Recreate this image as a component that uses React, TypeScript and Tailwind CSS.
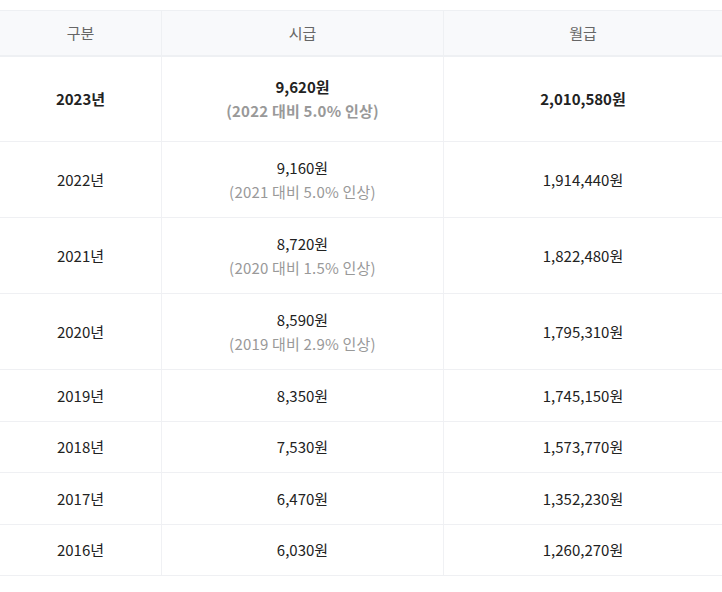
import React from "react";

type Row = {
  year: string;
  hourly: string;
  note?: string;
  monthly: string;
  h: string;
  bold?: boolean;
};

const rows: Row[] = [
  { year: "2023년", hourly: "9,620원", note: "(2022 대비 5.0% 인상)", monthly: "2,010,580원", h: "h-[85px]", bold: true },
  { year: "2022년", hourly: "9,160원", note: "(2021 대비 5.0% 인상)", monthly: "1,914,440원", h: "h-[76px]" },
  { year: "2021년", hourly: "8,720원", note: "(2020 대비 1.5% 인상)", monthly: "1,822,480원", h: "h-[76px]" },
  { year: "2020년", hourly: "8,590원", note: "(2019 대비 2.9% 인상)", monthly: "1,795,310원", h: "h-[76px]" },
  { year: "2019년", hourly: "8,350원", monthly: "1,745,150원", h: "h-[52px]" },
  { year: "2018년", hourly: "7,530원", monthly: "1,573,770원", h: "h-[51px]" },
  { year: "2017년", hourly: "6,470원", monthly: "1,352,230원", h: "h-[52px]" },
  { year: "2016년", hourly: "6,030원", monthly: "1,260,270원", h: "h-[51px]" },
];

export default function App() {
  return (
    <div
      className="w-[722px] h-[592px] bg-white pt-[10px] text-[15px] leading-[24px] text-[#222]"
      style={{ fontFamily: '"Noto Sans CJK KR", "Noto Sans", sans-serif' }}
    >
      <div className="border-t border-[#eef0f3]">
        <div className="grid grid-cols-[162px_282px_278px] h-[46px] bg-[#f8f9fb] border-b-2 border-[#eef0f3] text-[#666]">
          <div className="flex items-center justify-center border-r border-[#eef0f3]">구분</div>
          <div className="flex items-center justify-center border-r border-[#eef0f3]">시급</div>
          <div className="flex items-center justify-center">월급</div>
        </div>
        {rows.map((r) => (
          <div
            key={r.year}
            className={`grid grid-cols-[162px_282px_278px] border-b border-[#eff0f3] ${r.h} ${r.bold ? "font-bold" : ""}`}
          >
            <div className="flex items-center justify-center border-r border-[#f0f1f4]">{r.year}</div>
            <div className="flex flex-col items-center justify-center border-r border-[#f0f1f4]">
              <div>{r.hourly}</div>
              {r.note && <div className="text-[#999] tracking-[0.2px]">{r.note}</div>}
            </div>
            <div className="flex items-center justify-center">{r.monthly}</div>
          </div>
        ))}
      </div>
    </div>
  );
}
